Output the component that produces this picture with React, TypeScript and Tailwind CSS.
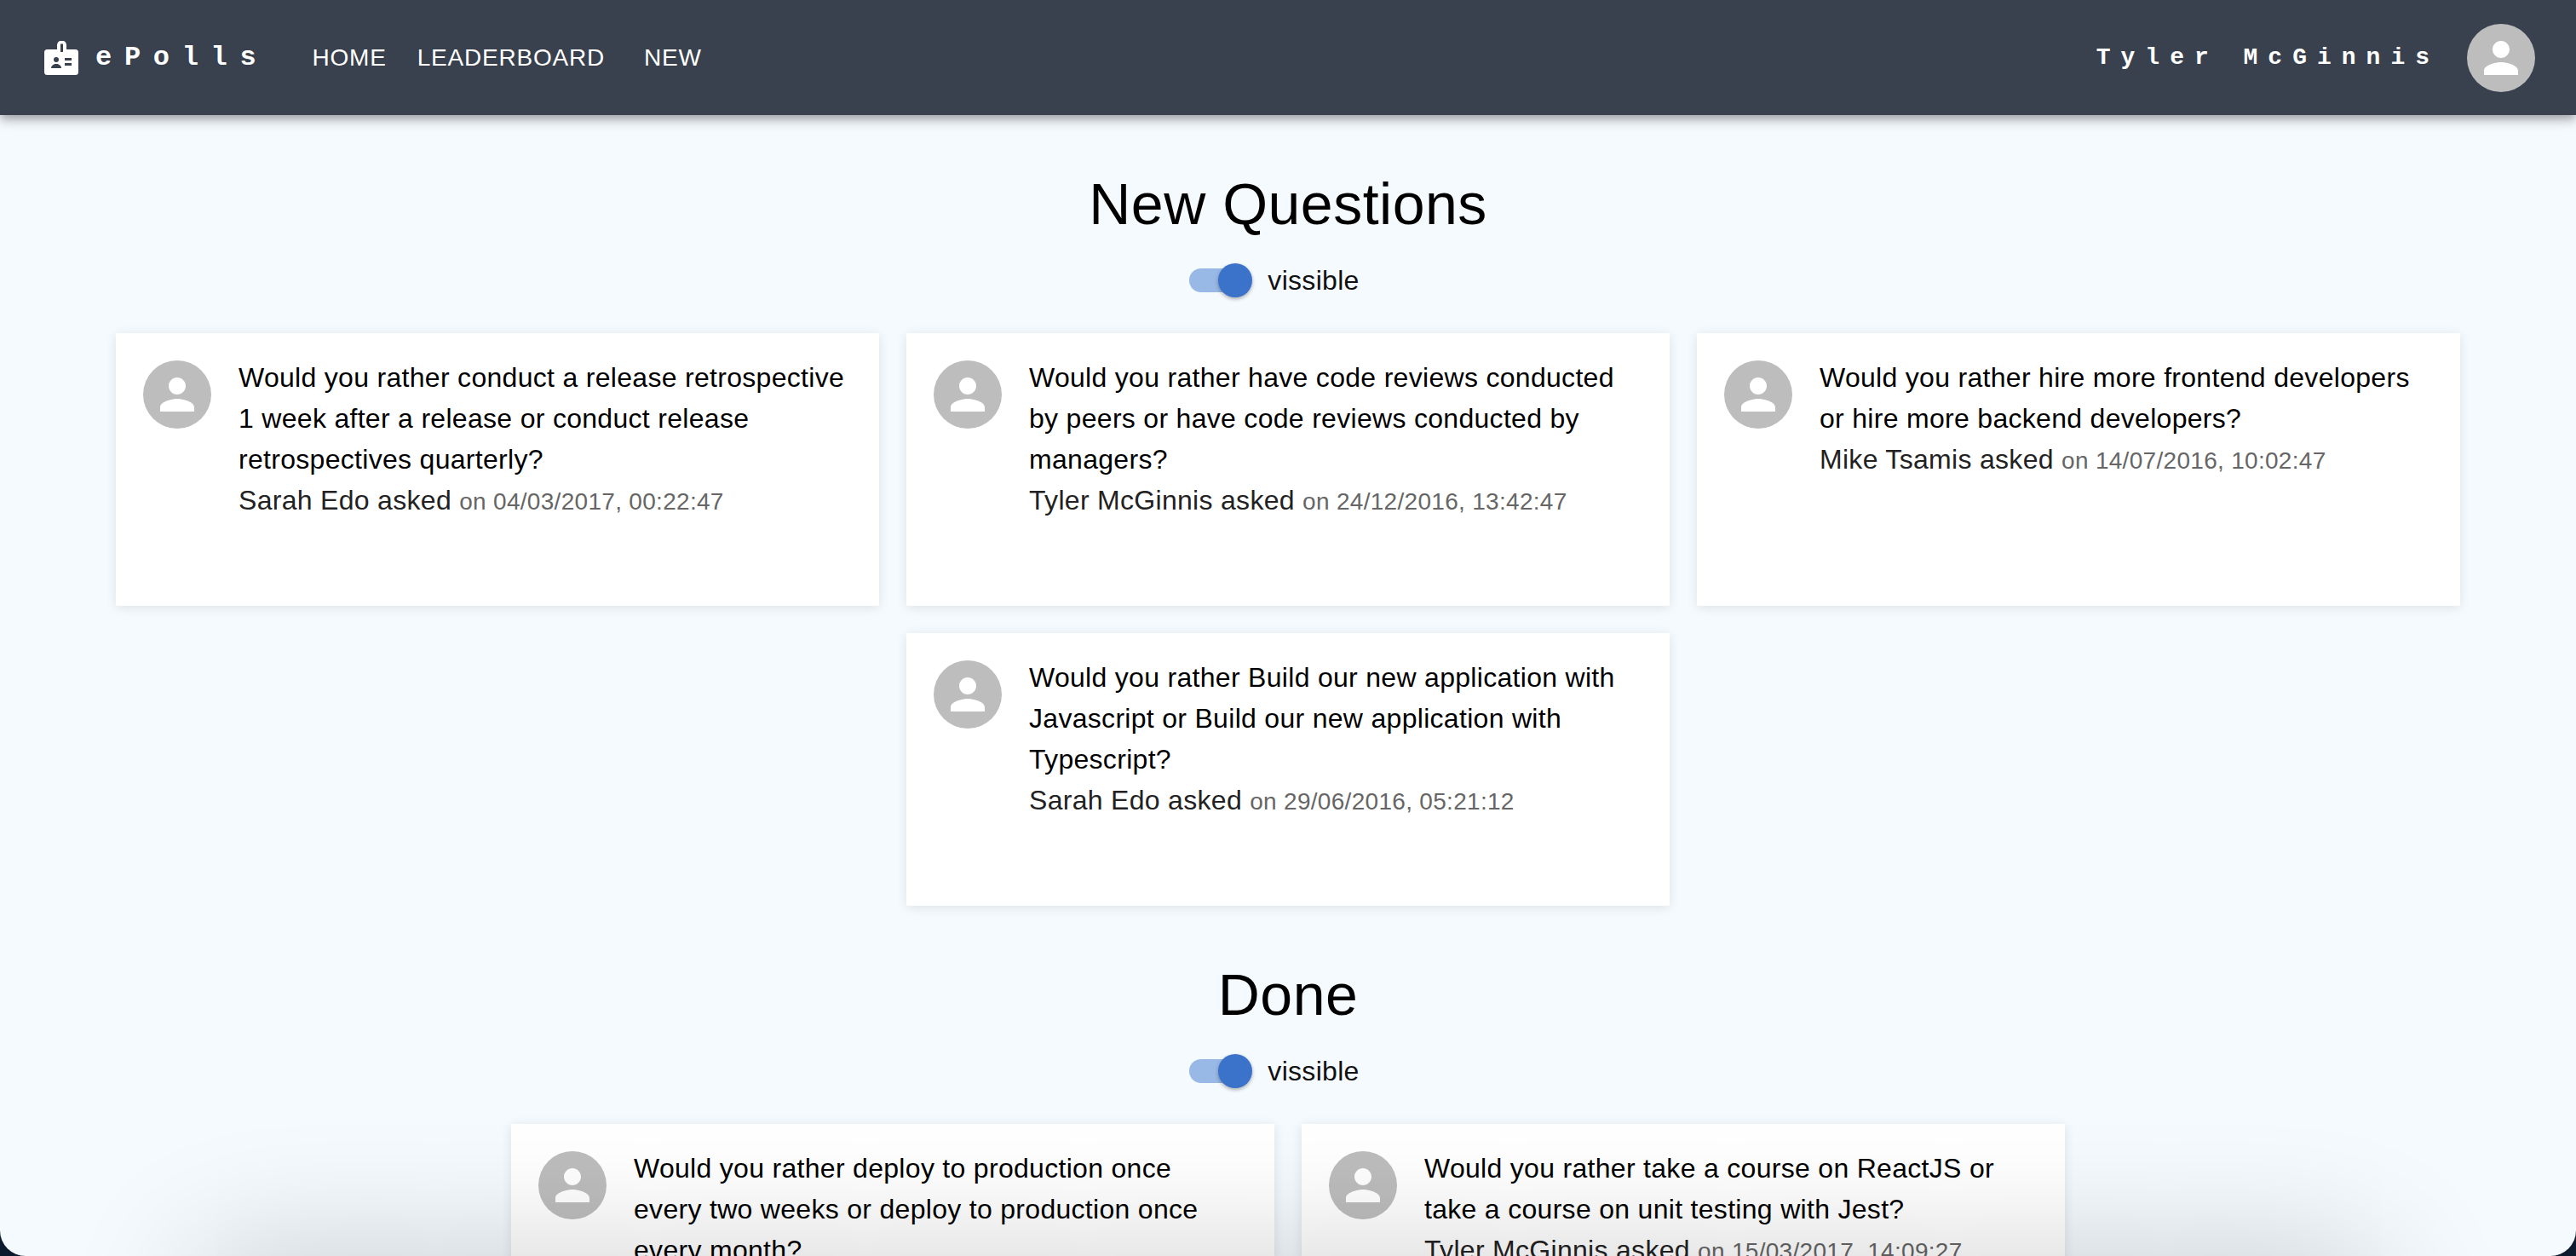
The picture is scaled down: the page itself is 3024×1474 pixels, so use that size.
const questions = [
  {
    id: "q1",
    text: "Would you rather conduct a release retrospective 1 week after a release or conduct release retrospectives quarterly?",
    author: "Sarah Edo",
    date: "04/03/2017, 00:22:47",
  },
  {
    id: "q2",
    text: "Would you rather have code reviews conducted by peers or have code reviews conducted by managers?",
    author: "Tyler McGinnis",
    date: "24/12/2016, 13:42:47",
  },
  {
    id: "q3",
    text: "Would you rather hire more frontend developers or hire more backend developers?",
    author: "Mike Tsamis",
    date: "14/07/2016, 10:02:47",
  },
  {
    id: "q4",
    text: "Would you rather Build our new application with Javascript or Build our new application with Typescript?",
    author: "Sarah Edo",
    date: "29/06/2016, 05:21:12",
  },
];

const done = [
  {
    id: "d1",
    text: "Would you rather deploy to production once every two weeks or deploy to production once every month?",
  },
  {
    id: "d2",
    text: "Would you rather take a course on ReactJS or take a course on unit testing with Jest?",
    author: "Tyler McGinnis",
    date: "15/03/2017, 14:09:27",
  },
];

const Avatar = () => (
  <div className="flex h-20 w-20 shrink-0 items-center justify-center rounded-full bg-[#bdbdbd]">
    <svg viewBox="0 0 24 24" className="h-[60px] w-[60px] fill-white">
      <path d="M12 12c2.21 0 4-1.79 4-4s-1.79-4-4-4-4 1.79-4 4 1.79 4 4 4zm0 2c-2.67 0-8 1.34-8 4v2h16v-2c0-2.66-5.33-4-8-4z" />
    </svg>
  </div>
);

const BadgeLogo = () => (
  <svg viewBox="0 0 40 40" className="h-10 w-10 fill-white">
    <path
      fillRule="evenodd"
      d="M15 8V5a5.5 5.5 0 0 1 11 0v5h10.500a3.500 3.500 0 0 1 3.500 3.500v23a3.500 3.500 0 0 1-3.500 3.500h-33a3.500 3.500 0 0 1-3.500-3.500v-23a3.500 3.500 0 0 1 3.500-3.500H15zM19 3.500v9.500h3V3.500zM24 20v3h8v-3zM24 26v3h8v-3z"
    />
    <circle cx="14" cy="22" r="3" fill="#38414d" />
    <path d="M8 32c0-3 3-5 6-5s6 2 6 5z" fill="#38414d" />
  </svg>
);

const Visibility = () => (
  <div className="mt-[10px] mb-6 flex h-[76px] items-center justify-center pr-[32px]">
    <div className="relative h-7 w-[68px] rounded-full bg-[#98b8e6]">
      <div className="absolute -top-[6px] left-[34px] h-10 w-10 rounded-full bg-[#3b73cb] shadow-[0_2px_4px_rgba(0,0,0,0.3)]" />
    </div>
    <span className="ml-[24px] text-[32px] tracking-[0.3px] text-[#111]">vissible</span>
  </div>
);

const QuestionCard = ({
  question,
}: {
  question: { text: string; author?: string; date?: string };
}) => (
  <div className="flex h-[320px] w-[896px] gap-8 bg-white pt-8 pr-9 pl-8 shadow-[0_2px_12px_rgba(0,0,0,0.1)]">
    <Avatar />
    <div className="-mt-[4px] flex-1 text-[32px] leading-[48px] tracking-[0.3px] text-black">
      <p>{question.text}</p>
      {question.author && (
        <p className="text-[#222]">
          {question.author} asked{" "}
          <span className="text-[28px] text-[#666]">on {question.date}</span>
        </p>
      )}
    </div>
  </div>
);

const Section = ({
  title,
  items,
}: {
  title: string;
  items: { id: string; text: string; author?: string; date?: string }[];
}) => (
  <section className="pt-[62px]">
    <h2 className="text-center text-[68px] leading-[84px] tracking-[0.5px] text-black">{title}</h2>
    <Visibility />
    <div className="flex flex-wrap justify-center gap-8 px-[136px]">
      {items.map((item) => (
        <QuestionCard question={item} key={item.id} />
      ))}
    </div>
  </section>
);

const App = () => {
  return (
    <div className="h-[1474px] w-[3024px] overflow-hidden bg-[#0d1b2e] font-['Liberation_Sans',sans-serif]">
      <div className="relative h-full overflow-hidden rounded-b-[30px] bg-[#f5faff]">
        <header className="relative z-10 flex h-[135px] items-center justify-between bg-[#38414d] pr-12 pl-[52px] text-white shadow-[0_4px_8px_-2px_rgba(0,0,0,0.2),0_8px_10px_rgba(0,0,0,0.14),0_2px_20px_rgba(0,0,0,0.12)]">
          <div className="flex items-center">
            <BadgeLogo />
            <span className="ml-[20px] font-['Liberation_Mono',monospace] text-[32px] font-bold tracking-[14.7px]">
              ePolls
            </span>
            <nav className="ml-[51px] flex text-[28px] tracking-[0.8px]">
              <span>HOME</span>
              <span className="ml-[36px]">LEADERBOARD</span>
              <span className="ml-[46px]">NEW</span>
            </nav>
          </div>
          <div className="flex items-center">
            <span className="mr-[32px] font-['Liberation_Mono',monospace] text-[28px] font-bold tracking-[12px]">
              Tyler McGinnis
            </span>
            <Avatar />
          </div>
        </header>
        <Section title="New Questions" items={questions} />
        <Section title="Done" items={done} />
        {/* window shadow coming up from below the fold */}
        <div className="pointer-events-none absolute top-[1474px] right-[230px] left-[230px] z-20 h-40 rounded-[40px] shadow-[0_0_160px_rgba(0,0,0,0.2)]" />
      </div>
    </div>
  );
};

export default App;
